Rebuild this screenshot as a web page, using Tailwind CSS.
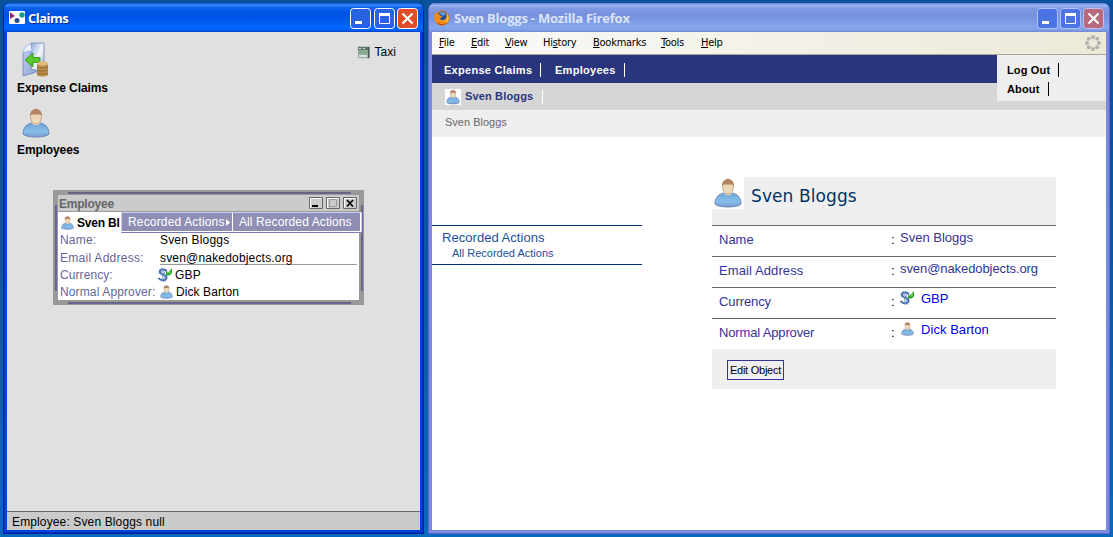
<!DOCTYPE html>
<html lang="en">
<head>
<meta charset="utf-8">
<title>Claims</title>
<script src="https://cdn.jsdelivr.net/npm/@tailwindcss/browser@4"></script>
</head>
<body class="relative h-[537px] w-[1113px] overflow-hidden bg-[linear-gradient(180deg,#07529a_0%,#0a58a4_50%,#086abc_100%)] font-['Liberation_Sans',sans-serif] text-[12px] text-black">

<svg class="absolute size-0">
  <defs>
    <linearGradient id="body" x1="0" y1="0" x2="0" y2="1"><stop offset="0" stop-color="#6fa3d6"/><stop offset=".6" stop-color="#85bfe8"/><stop offset="1" stop-color="#7c9cd0"/></linearGradient>
    <linearGradient id="face" x1="0" y1="0" x2="0" y2="1"><stop offset="0" stop-color="#e8c9a6"/><stop offset="1" stop-color="#efe2c4"/></linearGradient>
    <linearGradient id="page" x1="0" y1="0" x2="1" y2="1"><stop offset="0" stop-color="#8fa9dc"/><stop offset=".5" stop-color="#f4f6fc"/><stop offset="1" stop-color="#8b9ccc"/></linearGradient>
    <linearGradient id="leaf" x1="0" y1="0" x2="1" y2="1"><stop offset="0" stop-color="#c4d2f0"/><stop offset="1" stop-color="#8c9fd2"/></linearGradient>
    <symbol id="person" viewBox="0 0 28 30">
      <path d="M1 26C1 19 5 16 10 15h8c5 1 9 4 9 11-3 4-23 4-26 0z" fill="url(#body)" stroke="#7085b8" stroke-width="1"/>
      <path d="M10 15c1 3 7 3 8 0l-1-3h-6z" fill="#ead9bc"/>
      <ellipse cx="14" cy="8.500" rx="5.500" ry="7.500" fill="url(#face)" stroke="#b8937a" stroke-width=".8"/>
      <path d="M8 8C7.500-1 20.500-1 20 8l-1.500-1.500h-9z" fill="#b58264"/>
    </symbol>
    <symbol id="money" viewBox="0 0 16 16">
      <path d="M10 4.500C8 1.500 2.500 2 2.700 5c.2 3 6.800 2 6.800 5.500 0 3.500-6 3.500-8 .5" fill="none" stroke="#4a72ae" stroke-width="2"/>
      <path d="M4.500 1l2 14M6.500 1l2 13.500" fill="none" stroke="#6b90c4" stroke-width="1"/>
      <path d="M9 5l2 .5L15 1v5c-1 2-3 3-6 2.500z" fill="#2fa52f"/><path d="M10.500 7l3.500-3.500v2z" fill="#6fdc5c"/>
    </symbol>
  </defs>
</svg>

<!-- Claims window -->
<section class="absolute left-[3px] top-[3px] flex h-[531px] w-[421px] flex-col rounded-t-[7px] border-x border-b border-[#0020a8] bg-[#0044e0] px-[3px] pb-[3px] shadow-[inset_1px_0_#0838cc,inset_-1px_0_#0030b8,inset_0_-1px_#0030b8]">
  <header class="-mx-[3px] flex h-[29px] shrink-0 items-center rounded-t-[6px] bg-[linear-gradient(180deg,#0a50d0_0%,#3a8cff_7%,#0a62ee_16%,#0052e4_35%,#0058ec_60%,#0068ff_82%,#0062f8_93%,#0040c8_100%)] pl-[5px] pr-[5px]">
    <svg class="h-[13px] w-4 shrink-0" viewBox="0 0 16 13"><rect width="16" height="13" rx="1" fill="#fff"/><path d="M1 1l5 4-5 3z" fill="#8c2b80"/><circle cx="13" cy="4" r="2.700" fill="#159d91"/><circle cx="8" cy="9.500" r="2.500" fill="#234f90"/></svg>
    <h1 class="ml-[3px] grow pt-[3px] font-['Open_Sans',sans-serif] text-[13px] font-bold tracking-[-0.500px] text-white [text-shadow:1px_1px_#0a3090]">Claims</h1>
    <div class="flex gap-[2px] pt-[1px]">
      <svg class="size-[21px]" viewBox="0 0 21 21"><rect x=".5" y=".5" width="20" height="20" rx="3" fill="#2a62e4" stroke="#fff"/><path d="M5 13h7v3H5z" fill="#fff"/></svg>
      <svg class="ml-[1px] size-[21px]" viewBox="0 0 21 21"><rect x=".5" y=".5" width="20" height="20" rx="3" fill="#2a62e4" stroke="#fff"/><path d="M5.500 6h10v9.500h-10z" fill="none" stroke="#fff"/><path d="M5 5h11v3H5z" fill="#fff"/></svg>
      <svg class="size-[21px]" viewBox="0 0 21 21"><rect x=".5" y=".5" width="20" height="20" rx="3" fill="#e04e28" stroke="#fff"/><path d="M5.500 5.500l10 10m0-10l-10 10" stroke="#fff" stroke-width="2.200"/></svg>
    </div>
  </header>
  <main class="flex grow justify-between bg-[#e0e0e0] pl-[10px] pr-[24px]">
    <nav class="flex flex-col items-start font-bold">
      <svg class="ml-[5px] mt-[10px] h-[36px] w-[28px]" viewBox="0 0 28 36">
        <path d="M9 1h13v25l-13 6z" fill="url(#page)" stroke="#8b98b8"/>
        <path d="M1 12L9 2v25l8 2-16 5z" fill="url(#leaf)" stroke="#8092c4"/>
        <path d="M1 11C2 5 5 2 9 2l1 8-3-1z" fill="#e9effc" stroke="#8ba3d8" stroke-width=".7"/>
        <path d="M3 18l8-7v4.500h7v5h-7V25z" fill="#57c72a" stroke="#2c901b" stroke-width=".8"/>
        <path d="M15 22v11c2 2 9 2 11 0V22z" fill="#b88d4d"/><ellipse cx="20.500" cy="21.500" rx="5.500" ry="2" fill="#e0bc7c"/>
        <path d="M15 25c3 1.500 8 1.500 11 0M15 28c3 1.500 8 1.500 11 0M15 31c3 1.500 8 1.500 11 0" fill="none" stroke="#8a642e" stroke-width=".8"/>
      </svg>
      <span class="mt-[2px] h-[16px] leading-[16px] tracking-[-0.080px]">Expense Claims</span>
      <svg class="ml-[5px] mt-[12px] h-[30px] w-[28px]"><use href="#person"/></svg>
      <span class="mt-[4px] h-[16px] leading-[16px] tracking-[-0.120px]">Employees</span>
    </nav>
    <div class="mt-[12px] flex h-[16px] items-center gap-1">
      <svg class="size-[13px]" viewBox="0 0 13 13"><path d="M1 .5h11.500v12L1 12z" fill="#9aa8a8"/><path d="M1 1h10v3H1z" fill="#57756b"/><path d="M2 2h2v1H2zm4 0h2v1H6z" fill="#d8e8dc"/><path d="M1 5h10v3H1z" fill="#7fae88"/><path d="M2 9h8v2H2z" fill="#d9dfdf"/><path d="M11 1h1.500v11H11z" fill="#4a5a58"/></svg>
      <span class="tracking-[0.050px]">Taxi</span>
    </div>
  </main>
  <footer class="h-[19px] shrink-0 border-t border-[#666] bg-[#cbcbcb] pl-[5px] leading-[20px] tracking-[0.130px]">Employee: Sven Bloggs null</footer>
</section>

<!-- Employee internal frame -->
<section class="absolute left-[53px] top-[190px] h-[115px] w-[311px] bg-[#999] p-[5px] pr-[5px]">
  <div class="absolute left-[15px] top-[2px] h-[2px] w-[283px] border-b border-[#6666a8] bg-[#666]"></div>
  <div class="absolute bottom-[1px] left-[15px] h-[2px] w-[283px] border-b border-[#6666a8] bg-[#666]"></div>
  <div class="absolute left-[2px] top-[15px] h-[86px] w-[2px] border-r border-[#6666a8] bg-[#666]"></div>
  <div class="absolute right-[1px] top-[15px] h-[86px] w-[2px] border-r border-[#6666a8] bg-[#666]"></div>
  <header class="flex h-[17px] items-center gap-[3px] border-b border-[#999] bg-[#cbcbcb] pl-[1px] pr-[2px]">
    <h2 class="grow pt-[1px] font-bold tracking-[-0.220px] text-[#666]">Employee</h2>
    <svg class="h-3 w-[14px]" viewBox="0 0 14 12"><path d="M.5.500h13v11H.5z" fill="#ccc" stroke="#666"/><path d="M1.500 10.500v-9h11" fill="none" stroke="#fff"/><path d="M3 8h6v2H3z"/></svg>
    <svg class="h-3 w-[14px]" viewBox="0 0 14 12"><path d="M.5.500h13v11H.5z" fill="#ccc" stroke="#666"/><path d="M1.500 10.500v-9h11" fill="none" stroke="#fff"/><path d="M3.500 2.500h7v7h-7z" fill="none" stroke="#999"/></svg>
    <svg class="h-3 w-[14px]" viewBox="0 0 14 12"><path d="M.5.500h13v11H.5z" fill="#ccc" stroke="#666"/><path d="M1.500 10.500v-9h11" fill="none" stroke="#fff"/><path d="M4 3l6 6.500M10 3L4 9.500" stroke="#000" stroke-width="1.700"/></svg>
  </header>
  <div class="h-[88px] bg-white pl-[2px] tracking-[0.180px]">
    <div class="flex h-[19px] items-center pt-[2px] font-bold"><svg class="ml-[1px] h-[14px] w-[13px] shrink-0"><use href="#person"/></svg><span class="ml-[3px] w-[44px] shrink-0 overflow-hidden whitespace-nowrap tracking-[-0.200px]">Sven Bl</span></div>
    <dl class="grid grid-cols-[100px_1fr] grid-rows-[18px_18px_16px_17px] items-center">
      <dt class="text-[#666699]">Name:</dt><dd>Sven Bloggs</dd>
      <dt class="tracking-[0.280px] text-[#666699]">Email Address:</dt><dd class="mr-[2px] h-[14px] border-b border-[#999] leading-[14px]">sven@nakedobjects.org</dd>
      <dt class="tracking-[0.080px] text-[#666699]">Currency:</dt><dd class="-ml-[3px] flex items-center gap-[2px]"><svg class="size-4"><use href="#money"/></svg>GBP</dd>
      <dt class="whitespace-nowrap tracking-[0.130px] text-[#666699]">Normal Approver:</dt><dd class="flex items-center gap-[3px] tracking-[0.080px]"><svg class="h-[14px] w-[13px]"><use href="#person"/></svg>Dick Barton</dd>
    </dl>
  </div>
  <div class="absolute left-[68px] top-[22px] flex h-[21px] w-[241px] border border-[#ccccff] border-b-[#7a7ab0] bg-[#8f8fb5] leading-[21px] text-white">
    <span class="flex w-[111px] items-center whitespace-nowrap border-b border-r border-white pl-[6px] pt-px tracking-[0.160px]">Recorded Actions<svg class="ml-px h-[7px] w-1" viewBox="0 0 4 7"><path d="M0 0l4 3.500L0 7z" fill="#fff"/></svg></span>
    <span class="flex grow items-center whitespace-nowrap border-b border-r border-white pl-[6px] pt-px tracking-[0.100px]">All Recorded Actions</span>
  </div>
</section>

<!-- Browser window -->
<section class="absolute left-[428px] top-[3px] flex h-[531px] w-[682px] flex-col rounded-t-[7px] border-x border-b border-[#6464c8] bg-[#7a8ae0] px-[3px] pb-[3px]">
  <header class="-mx-[3px] flex h-[29px] shrink-0 items-center rounded-t-[6px] bg-[linear-gradient(180deg,#6e80d4_0%,#9cb4f2_8%,#809ae6_18%,#7890dc_40%,#7c98e2_60%,#84a8ec_82%,#80a0ea_93%,#7088d0_100%)] px-[5px]">
    <svg class="size-4 shrink-0" viewBox="0 0 16 16"><circle cx="8" cy="8" r="7.500" fill="#e87814"/><circle cx="8.500" cy="6.500" r="5" fill="#1f4d9c"/><path d="M5 3c3-2 6-1 7 1l-3 2z" fill="#5ba6dc"/><path d="M1 3c1 1 2 1 4 1 1 2 3 2 4 3-2 0-3 1-3 2 2 2 5 1 6-1 1-2 0-4-1-5 4 2 5 6 3 9-4 5-11 4-13-1C0 8 0 5 1 3z" fill="#f28c18"/><path d="M13 4c3 4 1 8-3 9 3-2 4-5 3-9z" fill="#ffd75a"/><path d="M2 11c3 4 8 4 11 1-3 5-9 4-11-1z" fill="#b83c10"/></svg>
    <h1 class="ml-[4px] grow pt-[3px] font-['Open_Sans',sans-serif] text-[13px] font-bold tracking-[-0.220px] text-[#dce4fa]">Sven Bloggs - Mozilla Firefox</h1>
    <div class="flex gap-[2px] pt-[1px]">
      <svg class="size-[21px]" viewBox="0 0 21 21"><rect x=".5" y=".5" width="20" height="20" rx="3" fill="#4c74e4" stroke="#b0c2f6"/><path d="M5 13h7v3H5z" fill="#fff"/></svg>
      <svg class="size-[21px]" viewBox="0 0 21 21"><rect x=".5" y=".5" width="20" height="20" rx="3" fill="#4c74e4" stroke="#b0c2f6"/><path d="M5.500 6h10v9.500h-10z" fill="none" stroke="#fff"/><path d="M5 5h11v3H5z" fill="#fff"/></svg>
      <svg class="size-[21px]" viewBox="0 0 21 21"><rect x=".5" y=".5" width="20" height="20" rx="3" fill="#b7697e" stroke="#c9bfee"/><path d="M5.500 5.500l10 10m0-10l-10 10" stroke="#fff" stroke-width="2.200"/></svg>
    </div>
  </header>
  <div class="flex h-[23px] shrink-0 items-center justify-between border-b border-[#aca899] bg-[linear-gradient(90deg,#fafaf9,#ece9d8)] pl-[7px] pr-[5px]">
    <nav class="grid grid-cols-[32px_34px_38px_50px_67px_41px_30px] pt-px font-['DejaVu_Sans_Condensed','DejaVu_Sans',sans-serif] text-[11px] font-stretch-condensed tracking-[-0.250px]">
      <span><u>F</u>ile</span><span><u>E</u>dit</span><span><u>V</u>iew</span><span>Hi<u>s</u>tory</span><span><u>B</u>ookmarks</span><span class="pl-px"><u>T</u>ools</span><span><u>H</u>elp</span>
    </nav>
    <svg class="size-4" viewBox="0 0 16 16" fill="#b4b2ae"><circle cx="8" cy="2" r="2"/><circle cx="12.200" cy="3.800" r="2"/><circle cx="14" cy="8" r="2"/><circle cx="12.200" cy="12.200" r="2"/><circle cx="8" cy="14" r="2"/><circle cx="3.800" cy="12.200" r="2"/><circle cx="2" cy="8" r="2"/><circle cx="3.800" cy="3.800" r="2"/></svg>
  </div>
  <main class="relative grow bg-white">
    <nav class="flex h-[28px] items-center bg-[#29357c] pl-[12px] pt-[2px] text-[11px] font-bold tracking-[0.280px] text-white">
      <span class="flex h-[14px] w-[97px] items-center border-r border-white">Expense Claims</span>
      <span class="ml-[14px] flex h-[14px] w-[70px] items-center border-r border-white">Employees</span>
    </nav>
    <div class="flex h-[27px] items-center bg-[#d6d6d6] pl-[13px]">
      <span class="flex size-4 justify-center bg-white"><svg class="h-4 w-[14px]"><use href="#person"/></svg></span>
      <span class="ml-[4px] flex h-[14px] w-[78px] items-center border-r border-white text-[11px] font-bold tracking-[0.150px] text-[#29357c]">Sven Bloggs</span>
    </div>
    <div class="h-[27px] bg-[#efefef] pl-[13px] text-[11px] leading-[25px] text-[#666]">Sven Bloggs</div>
    <ul class="absolute right-0 top-0 flex h-[46px] w-[109px] flex-col gap-[5px] bg-[#eee] pl-[10px] pt-[8px] text-[11px] font-bold tracking-[0.150px]">
      <li class="flex h-[14px] w-[52px] items-center border-r border-black">Log Out</li>
      <li class="flex h-[14px] w-[42px] items-center border-r border-black">About</li>
    </ul>
    <div class="flex items-start">
      <aside class="mt-[88px] h-[40px] w-[210px] border-y border-[#003070] text-[#1c4f9e]">
        <h3 class="pl-[10px] pt-[4px] text-[13px] leading-[16px] tracking-[0.040px]">Recorded Actions</h3>
        <p class="pl-[20px] text-[11px] leading-[15px]">All Recorded Actions</p>
      </aside>
      <article class="ml-[70px] mt-[40px] w-[344px] text-[13px] text-[#333399]">
        <header class="flex h-[48px] bg-[#efefef]">
          <span class="flex size-[32px] items-center justify-center bg-white"><svg class="h-[30px] w-[28px]"><use href="#person"/></svg></span>
          <h2 class="ml-[7px] font-['DejaVu_Sans',sans-serif] text-[17px] leading-[38px] tracking-[0.100px] text-[#003366]">Sven Bloggs</h2>
        </header>
        <dl>
          <div class="flex h-[31px] border-t border-[#666] pl-[7px]"><dt class="w-[172px] leading-[28px]">Name</dt><dd class="flex"><span class="w-[9px] leading-[28px] text-black">:</span><span class="leading-[24px]">Sven Bloggs</span></dd></div>
          <div class="flex h-[31px] border-t border-[#666] pl-[7px]"><dt class="w-[172px] leading-[28px] tracking-[0.100px]">Email Address</dt><dd class="flex"><span class="w-[9px] leading-[28px] text-black">:</span><span class="leading-[24px] tracking-[-0.080px]">sven@nakedobjects.org</span></dd></div>
          <div class="flex h-[31px] border-t border-[#666] pl-[7px]"><dt class="w-[172px] leading-[28px] tracking-[-0.100px]">Currency</dt><dd class="flex"><span class="w-[8px] leading-[28px] text-black">:</span><svg class="mt-[2px] size-4"><use href="#money"/></svg><span class="ml-[6px] leading-[22px] text-[#0000ee]">GBP</span></dd></div>
          <div class="flex h-[31px] border-t border-[#666] pl-[7px]"><dt class="w-[172px] leading-[28px] tracking-[-0.150px]">Normal Approver</dt><dd class="flex"><span class="w-[10px] leading-[28px] text-black">:</span><svg class="mt-[3px] h-[14px] w-[13px]"><use href="#person"/></svg><span class="ml-[7px] leading-[22px] tracking-[0.050px] text-[#0000ee]">Dick Barton</span></dd></div>
        </dl>
        <footer class="h-[40px] bg-[#efefef] pl-[15px] pt-[11px]">
          <button class="h-[20px] w-[57px] whitespace-nowrap border border-[#333399] text-[11px] leading-[18px] tracking-[-0.240px] text-black">Edit Object</button>
        </footer>
      </article>
    </div>
  </main>
</section>
</body>
</html>
